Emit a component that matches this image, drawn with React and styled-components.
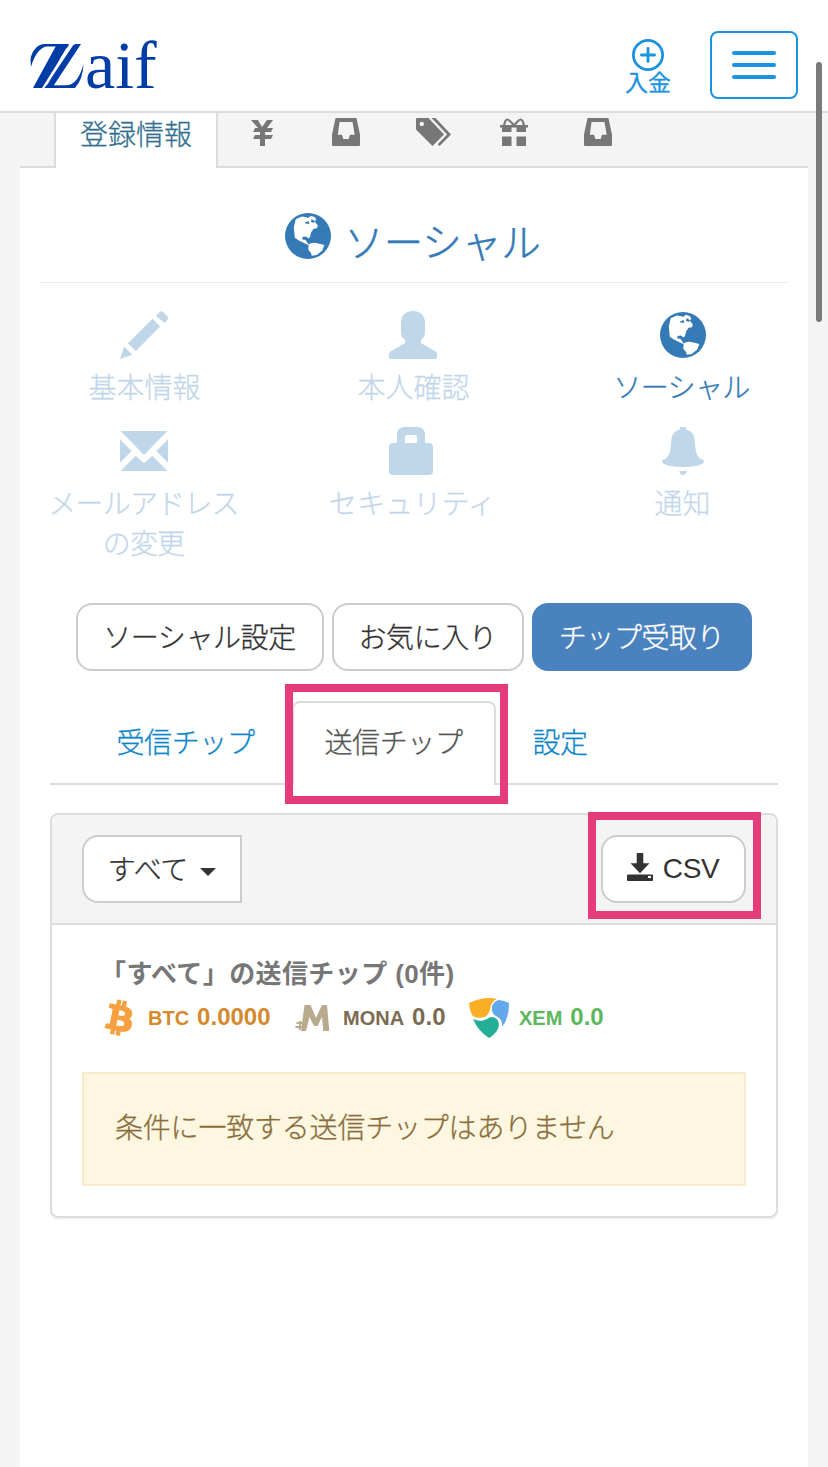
import React from "react";
import styled, { createGlobalStyle, css } from "styled-components";
import { FaBtc } from "react-icons/fa";

const colors = {
  grey: "#f4f4f4",
  line: "#dcdcdc",
  blue: "#337ab7",
  link: "#0e86ca",
  header: "#1a93e0",
  pink: "#e63c7b"
};

const GlobalStyle = createGlobalStyle`
  * {
    box-sizing: border-box;
  }
  body {
    margin: 0;
    background: ${colors.grey};
    font-family: "Liberation Sans", "Noto Sans CJK JP", sans-serif;
    font-size: 28px;
    font-weight: 300;
    line-height: 40px;
    color: #333;
  }
`;

// sits between the light and regular cuts of the font
const demiLight = css`
  -webkit-text-stroke: 0.3px currentColor;
`;

const Page = styled.div`
  position: relative;
  width: 828px;
  height: 1467px;
  overflow: hidden;
`;

////////////////////////////////////
// header

const Header = styled.header`
  display: flex;
  align-items: flex-start;
  justify-content: space-between;
  height: 113px;
  padding: 31px 30px 0;
  background: white;
  border-bottom: 2px solid ${colors.line};
`;

const Logo = styled.svg`
  display: block;
  width: 150px;
  height: 96px;
  margin-top: -16px;
  overflow: visible;
  fill: #003ca6;
  font-family: "Liberation Serif", serif;
`;

const HeaderRight = styled.div`
  display: flex;
  gap: 38px;
`;

const Deposit = styled.a`
  display: flex;
  flex-direction: column;
  align-items: center;
  width: 48px;
  padding-top: 8px;
  color: ${colors.header};
  font-family: "Noto Sans CJK JP", sans-serif;
  font-size: 23px;
  font-weight: 400;
  line-height: 21px;
  -webkit-text-stroke: 0.3px currentColor;

  svg {
    display: block;
    fill: none;
    stroke: currentColor;
    stroke-width: 2.8;
    stroke-linecap: round;
  }
`;

const MenuButton = styled.button`
  display: flex;
  flex-direction: column;
  align-items: center;
  justify-content: center;
  gap: 8px;
  width: 88px;
  height: 68px;
  padding: 0;
  background: white;
  border: 2px solid ${colors.header};
  border-radius: 8px;
`;

const MenuLine = styled.span`
  width: 44px;
  height: 4px;
  border-radius: 2px;
  background: ${colors.header};
`;

const ScrollThumb = styled.div`
  position: absolute;
  top: 62px;
  left: 816px;
  width: 6px;
  height: 260px;
  border-radius: 3px;
  background: #7a7a7a;
`;

////////////////////////////////////
// main tabs

const MainTabs = styled.nav`
  display: flex;
  height: 55px;
  margin: 0 20px;
  padding-left: 34px;
  border-bottom: 2px solid ${colors.line};
`;

const MainTab = styled.a`
  width: 84px;
  padding: 5px 28px 0;
  color: #777;

  svg {
    display: block;
    overflow: visible;
    fill: currentColor;
  }

  ${p =>
    p.$active &&
    css`
      width: 164px;
      height: 55px;
      margin-right: 2px;
      padding: 3px 24px 0;
      background: white;
      border: 2px solid ${colors.line};
      border-top: 0;
      border-bottom: 0;
      color: #31708f;
      white-space: nowrap;
      ${demiLight}
    `}
`;

const Content = styled.main`
  height: 1299px;
  margin: 0 20px;
  background: white;
`;

const Title = styled.h1`
  display: flex;
  justify-content: center;
  gap: 13px;
  height: 115px;
  margin: 0 20px;
  padding: 46px 2px 0 0;
  border-bottom: 1px solid #eee;
  color: ${colors.blue};
  font-size: 39.5px;
  font-weight: 300;
  line-height: 58px;
  -webkit-text-stroke: 0.5px currentColor;
`;

const TitleIcon = styled.div`
  height: 48px;
  margin-top: -1px;

  svg {
    display: block;
    fill: currentColor;
    stroke: none;
  }
`;

const IconGrid = styled.div`
  display: grid;
  grid-template-columns: repeat(3, 269px);
  margin-left: -10px;
  padding-top: 28px;
`;

const IconLink = styled.a`
  display: flex;
  flex-direction: column;
  align-items: center;
  min-height: 116px;
  color: ${colors.blue};
  opacity: ${p => (p.$active ? 1 : 0.3)};
  text-align: center;
`;

const IconBox = styled.div`
  display: flex;
  align-items: center;
  justify-content: center;
  height: 48px;
  margin-bottom: 10px;

  svg {
    display: block;
    fill: currentColor;
  }
`;

const IconLabel = styled.div`
  width: 194px;
  margin-left: ${p => (p.$kana ? "-2px" : 0)};
  letter-spacing: ${p => p.$kana || 0}px;
  ${demiLight}
`;

const ButtonRow = styled.div`
  display: flex;
  justify-content: center;
  gap: 8px;
  margin-top: 38px;
`;

const Button = styled.button`
  display: flex;
  align-items: center;
  justify-content: center;
  width: ${p => p.$width}px;
  height: 68px;
  padding: 4px 1px 0 0;
  border: 2px solid ${p => (p.$primary ? "#4a82bf" : "#ccc")};
  border-radius: 16px;
  background: ${p => (p.$primary ? "#4a82bf" : "white")};
  color: ${p => (p.$primary ? "white" : "#333")};
  font: inherit;
  letter-spacing: -0.4px;
  ${demiLight}
`;

const DropdownButton = styled(Button)`
  padding-right: 0;
  border-radius: 16px 0 0 16px;
  letter-spacing: -0.2px;
`;

const CsvButton = styled(Button)`
  padding-top: 0;
  -webkit-text-stroke: 0;
`;

////////////////////////////////////
// chip tabs

const ChipTabs = styled.nav`
  display: flex;
  gap: 4px;
  height: 84px;
  margin: 30px 30px 28px;
  padding-left: 34px;
  border-bottom: 2px solid ${colors.line};
`;

const ChipTab = styled.a`
  position: relative;
  width: ${p => p.$width}px;
  height: 84px;
  padding: 21px 1px 0 0;
  border: 2px solid transparent;
  border-bottom: 0;
  border-radius: 8px 8px 0 0;
  color: ${colors.link};
  letter-spacing: -0.4px;
  text-align: center;
  ${demiLight}

  ${p =>
    p.$active &&
    css`
      background: white;
      border-color: ${colors.line};
      color: #555;
    `}
`;

const Highlight = styled.div`
  position: absolute;
  top: ${p => p.$top}px;
  left: ${p => p.$left}px;
  width: ${p => p.$width}px;
  height: ${p => p.$height}px;
  border: 8px solid ${colors.pink};
`;

const Panel = styled.section`
  height: 405px;
  margin: 0 30px;
  border: 2px solid ${colors.line};
  border-radius: 8px;
  box-shadow: 0 2px 2px rgba(0, 0, 0, 0.05);
`;

const PanelHead = styled.div`
  display: flex;
  justify-content: space-between;
  height: 110px;
  padding: 20px 30px;
  background: ${colors.grey};
  border-bottom: 2px solid ${colors.line};
  border-radius: 6px 6px 0 0;
`;

const Caret = styled.span`
  margin: 2px 0 0 12px;
  border: 8px solid transparent;
  border-top-color: #333;
  border-bottom: 0;
`;

const CsvWrap = styled.div`
  position: relative;
`;

const CsvLabel = styled.span`
  margin-left: 10px;
`;

const PanelBody = styled.div`
  padding: 29px 30px 0;
`;

const Summary = styled.div`
  padding-left: 18px;
  color: #777;
  font-size: 26px;
  font-weight: 700;
  letter-spacing: 0.4px;
  white-space: nowrap;
`;

const Coins = styled.div`
  display: flex;
  align-items: center;
  height: 44px;
  margin-top: 2px;
  padding-left: 22px;
  font-size: 20px;
  font-weight: 700;
`;

const CoinIcon = styled.div`
  display: flex;
  width: ${p => p.$width}px;

  svg {
    display: block;
  }
`;

const BitcoinIcon = styled(FaBtc)`
  margin-left: -1px;
  color: #f7a040;
  stroke-width: 18px;
  overflow: visible;
  transform: rotate(12deg);
`;

const Coin = styled.div`
  display: flex;
  align-items: baseline;
  gap: 8px;
  width: ${p => p.$width}px;
  margin-top: -2px;
  color: ${p => p.$color};
`;

const Amount = styled.span`
  font-size: 24px;
`;

const Alert = styled.div`
  height: 114px;
  margin-top: 32px;
  padding: 35px 31px 0;
  background: #fdf7e2;
  border: 2px solid #f8ebcb;
  color: #8a6d3b;
  letter-spacing: -0.2px;
  white-space: nowrap;
  ${demiLight}
`;

////////////////////////////////////
// icons

const Yen = () => (
  <svg width="28" height="28" viewBox="0 0 28 28">
    <path d="M3 2h7l4 7 5-7h6l-6 8h6l-2 4h-6v3h8l-2 4h-6v7h-5v-7H5l2-4h5v-3H5l2-4h3z" />
  </svg>
);

const Inbox = () => (
  <svg width="28" height="28" viewBox="0 0 28 28">
    <path
      fillRule="evenodd"
      d="M4.5 0h19q1 0 1.2 1L28 16.500V27q0 1-1 1H1q-1 0-1-1V16.500L3.300 1Q3.500 0 4.500 0zM7.500 4L5.800 16.700h4.200l1.300 4.300h5.400l1.300-4.300H22.700L20.500 4z"
    />
  </svg>
);

const Tags = () => (
  <svg width="35" height="28" viewBox="0 0 35 28">
    <path
      fillRule="evenodd"
      d="M0 1q0-1 1-1h11.500L28 16.500 16.500 28 0 11.500zM5.800 3.700a2.200 2.200 0 1 0 0 4.400 2.200 2.200 0 0 0 0-4.400z"
    />
    <path d="M15.500 0h4L35 16.500 23.500 28l-1.800-1.800 9.500-9.700z" />
  </svg>
);

const Gift = () => (
  <svg width="28" height="28" viewBox="0 0 28 28">
    <path d="M0 7h28v2.500h-2V14h-9.500V9.500h-5V14H2V9.500H0zM2 18.500h9.500V28H2zM16.500 18.500H26V28h-9.500z" />
    <path
      d="M4 8Q5 1.500 7.500 1.500 9 1.500 14 7.500 19 1.500 20.500 1.500 23 1.500 24 8"
      fill="none"
      stroke="currentColor"
      strokeWidth="2.200"
    />
  </svg>
);

const Pencil = () => (
  <svg width="50" height="48" viewBox="0 0 50 48">
    <path d="M36 5l3.600-4q1.700-1.500 3.400 0l4 4q1.700 1.700.5 3.700L44.500 12zM32.500 7.700l7.700 7.700L15.800 40 7.800 32.300zM4.200 35.500l8.200 8.200L0 48z" />
  </svg>
);

const User = () => (
  <svg width="50" height="48" viewBox="0 0 50 48">
    <path d="M12 12C12 4 17 0 24 0s12 4 12 12v10c0 3-2 5.500-4 6.500V32l14.500 8.500Q48 41.500 48 43v3.500q0 1.500-1.500 1.500h-45Q0 48 0 46.500V43q0-1.500 1.500-2.500L16 32v-3.500c-2-1-4-3.500-4-6.500z" />
  </svg>
);

const Globe = () => (
  <svg width="46" height="46" viewBox="0 0 46 46">
    <circle cx="23" cy="23" r="23" />
    <path
      fill="white"
      d="M10.700 6.300L15 4.300l2-.8 4.500.8L23 5l3-2.300 4 1.500 1.300 2.500-1.500 1.800 3 4-.8 2.700-3.300.6-2.400 3.200L25 24l-1.500 1.500-2.500-2-3.500.5-.3 2.500 3 .2 2 2.600 1 2.200q4-2.400 8-1.400l8.100 2-2 5.500-5.600 4.400-5 .7-.7-2.700-2.700-3.200.3-4.500-9.300-4.500-4.500-3-1-10.500z"
    />
    <path d="M20 9.500l3.500-1.500.8 3-3.800-.5zM26.500 6l-.5 3 3 .8 1-1.500z" />
  </svg>
);

const Envelope = () => (
  <svg width="50" height="40" viewBox="0 0 50 40">
    <path d="M.7 0h46.600L24 24zM0 8.200L11.700 20 0 31.700zM48 8.200L36.300 20 48 31.700zM.7 40l15-15.300L24 32.200l8.300-7.500L47.300 40z" />
  </svg>
);

const Lock = () => (
  <svg width="50" height="48" viewBox="0 0 50 48">
    <path
      fillRule="evenodd"
      d="M4 16h4V8q0-8 8-8h12q8 0 8 8v8h4q4 0 4 4v24q0 4-4 4H4q-4 0-4-4V20q0-4 4-4zM16 16h12v-6q0-2-2-2h-8q-2 0-2 2z"
    />
  </svg>
);

const Bell = () => (
  <svg width="42" height="48" viewBox="0 0 42 48">
    <path d="M18 1q0-1 1-1h4q1 0 1 1v1.500c5 1 8 5 8.500 9.500l1.200 11c.5 4 2 6.500 5 9 1.500 0 3.300 1 3.300 2.500 0 3-9 5.500-21 5.500S0 37.500 0 34.500C0 33 1.800 32 3.300 32c3-2.500 4.500-5 5-9l1.200-11C10 7.500 13 3.500 18 2.500zM17.300 43.700q3.700.5 7.400 0Q24 48 21 48t-3.700-4.300z" />
  </svg>
);

const DownloadSvg = styled.svg`
  display: block;
  margin-top: -4px;
  fill: currentColor;
`;

const Download = () => (
  <DownloadSvg width="26" height="28" viewBox="0 0 26 28">
    <path
      fillRule="evenodd"
      d="M9.700 1q0-1 1-1h4.600q1 0 1 1v9.300h6.200L13 20.300l-9.500-10h6.200zM1 21.500h24q1 0 1 1V27q0 1-1 1H1q-1 0-1-1v-4.500q0-1 1-1zM21 23v2h3v-2z"
    />
  </DownloadSvg>
);

const Mona = () => (
  <svg width="36" height="28" viewBox="0 0 36 28">
    <path
      fill="#b8aa8c"
      d="M9.500 1h6l5.500 13 6-13h5l2.300 26h-6l-1.300-14-4.500 9h-3.500l-4.500-9-3.500 14H6z"
    />
    <path d="M1.500 19h9M.5 23h9M5.500 17l-1 9" stroke="#b8aa8c" strokeWidth="2" />
  </svg>
);

const Nem = () => (
  <svg width="42" height="42" viewBox="0 0 42 42">
    <path
      fill="#f9ae25"
      d="M1 6Q12 1 21 1q5 0 8 1-5 2-6.500 8c-1 7-4 10-8.500 10.500Q7 21.500 4 18 1 12 1 6z"
    />
    <path
      fill="#62a8ea"
      d="M31 3q5 .7 10 3 0 16-7 24c1-6-2-9-6-11-6-3-6-14 3-16z"
    />
    <path
      fill="#24ae98"
      d="M5 22q5 2.500 10 1.500c4-1 6-3 8-3.500 6 0 9 5 7.500 10.500Q28 37 21 41 10 34 5 22z"
    />
  </svg>
);

////////////////////////////////////

const ZaifLogo = () => (
  <Logo viewBox="0 -16 150 96">
    <clipPath id="initial">
      <path d="M12 12h39L23 54.500h20V57H3l25-41.500H12z" />
    </clipPath>
    <g clipPath="url(#initial)">
      <text transform="translate(5 57) scale(1.22 1)" fontSize="66" fontStyle="italic">
        Z
      </text>
    </g>
    {/* double slash and swashes around the initial */}
    <path d="M27 13h12L12 57H3z" />
    <path d="M45 13h6L24 54l-2 3h-7z" />
    <path d="M39.500 13h4.500L14.500 57H12z" fill="white" />
    <path d="M1 36Q-1 24 5 18 9 13 15 13h14l-1 2H17Q6 18 1 36z" />
    <path d="M15 57h30Q53 48 53.500 33 48 54 36 54.500H20z" />
    <text x="55" y="57" fontSize="68">
      aif
    </text>
  </Logo>
);

const sections = [
  { icon: <Pencil />, label: "基本情報" },
  { icon: <User />, label: "本人確認" },
  { icon: <Globe />, label: "ソーシャル", kana: -0.6, active: true },
  { icon: <Envelope />, label: "メールアドレスの変更", kana: -0.8 },
  { icon: <Lock />, label: "セキュリティ", kana: 0.1 },
  { icon: <Bell />, label: "通知" }
];

const App = () => (
  <>
    <GlobalStyle />
    <Page>
      <Header>
        <ZaifLogo />
        <HeaderRight>
          <Deposit>
            <svg width="32" height="32" viewBox="0 0 32 32">
              <circle cx="16" cy="16" r="14.6" />
              <path d="M16 9.400v13.200M9.400 16h13.200" />
            </svg>
            入金
          </Deposit>
          <MenuButton>
            <MenuLine />
            <MenuLine />
            <MenuLine />
          </MenuButton>
        </HeaderRight>
      </Header>

      <MainTabs>
        <MainTab $active>登録情報</MainTab>
        <MainTab>
          <Yen />
        </MainTab>
        <MainTab>
          <Inbox />
        </MainTab>
        <MainTab>
          <Tags />
        </MainTab>
        <MainTab>
          <Gift />
        </MainTab>
        <MainTab>
          <Inbox />
        </MainTab>
      </MainTabs>

      <Content>
        <Title>
          <TitleIcon>
            <Globe />
          </TitleIcon>
          ソーシャル
        </Title>

        <IconGrid>
          {sections.map(s => (
            <IconLink key={s.label} $active={s.active}>
              <IconBox>{s.icon}</IconBox>
              <IconLabel $kana={s.kana}>{s.label}</IconLabel>
            </IconLink>
          ))}
        </IconGrid>

        <ButtonRow>
          <Button $width={248}>ソーシャル設定</Button>
          <Button $width={192}>お気に入り</Button>
          <Button $width={220} $primary>
            チップ受取り
          </Button>
        </ButtonRow>

        <ChipTabs>
          <ChipTab $width={204}>受信チップ</ChipTab>
          <ChipTab $width={204} $active>
            送信チップ
            <Highlight $top={-19} $left={-9} $width={223} $height={120} />
          </ChipTab>
          <ChipTab $width={121}>設定</ChipTab>
        </ChipTabs>

        <Panel>
          <PanelHead>
            <DropdownButton $width={160}>
              すべて
              <Caret />
            </DropdownButton>
            <CsvWrap>
              <CsvButton $width={145}>
                <Download />
                <CsvLabel>CSV</CsvLabel>
              </CsvButton>
              <Highlight $top={-23} $left={-13} $width={173} $height={107} />
            </CsvWrap>
          </PanelHead>
          <PanelBody>
            <Summary>「すべて」の送信チップ (0件)</Summary>
            <Coins>
              <CoinIcon $width={44}>
                <BitcoinIcon size={34} />
              </CoinIcon>
              <Coin $width={147} $color="#d58a2e">
                BTC <Amount>0.0000</Amount>
              </Coin>
              <CoinIcon $width={48}>
                <Mona />
              </CoinIcon>
              <Coin $width={125} $color="#7a6b52">
                MONA <Amount>0.0</Amount>
              </Coin>
              <CoinIcon $width={51}>
                <Nem />
              </CoinIcon>
              <Coin $width={100} $color="#5cb85c">
                XEM <Amount>0.0</Amount>
              </Coin>
            </Coins>
            <Alert>条件に一致する送信チップはありません</Alert>
          </PanelBody>
        </Panel>
      </Content>

      <ScrollThumb />
    </Page>
  </>
);

export default App;
